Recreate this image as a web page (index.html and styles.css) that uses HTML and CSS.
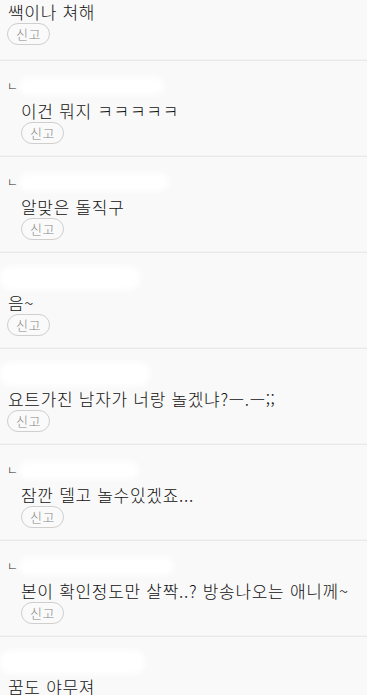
FILE: index.html
```html
<!DOCTYPE html>
<html lang="ko">
<head>
<meta charset="utf-8">
<link rel="stylesheet" href="styles.css">
</head>
<body>
<ul class="list">
  <li class="item first">
    <p class="msg">쌕이나 쳐해</p>
    <button class="report">신고</button>
  </li>
  <li class="item reply">
    <div class="head"><span class="mark">ㄴ</span><span class="blob w145"></span></div>
    <p class="msg">이건 뭐지 ㅋㅋㅋㅋㅋ</p>
    <button class="report">신고</button>
  </li>
  <li class="item reply">
    <div class="head"><span class="mark">ㄴ</span><span class="blob w150"></span></div>
    <p class="msg">알맞은 돌직구</p>
    <button class="report">신고</button>
  </li>
  <li class="item">
    <div class="head"><span class="blob w140"></span></div>
    <p class="msg">음~</p>
    <button class="report">신고</button>
  </li>
  <li class="item">
    <div class="head"><span class="blob w150"></span></div>
    <p class="msg">요트가진 남자가 너랑 놀겠냐?—.—;;</p>
    <button class="report">신고</button>
  </li>
  <li class="item reply">
    <div class="head"><span class="mark">ㄴ</span><span class="blob w120"></span></div>
    <p class="msg">잠깐 델고 놀수있겠죠...</p>
    <button class="report">신고</button>
  </li>
  <li class="item reply">
    <div class="head"><span class="mark">ㄴ</span><span class="blob w155"></span></div>
    <p class="msg">본이 확인정도만 살짝..? 방송나오는 애니께~</p>
    <button class="report">신고</button>
  </li>
  <li class="item">
    <div class="head"><span class="blob w145"></span></div>
    <p class="msg">꿈도 야무져</p>
    <button class="report">신고</button>
  </li>
</ul>
</body>
</html>
```
FILE: styles.css
```css
html, body {
  margin: 0;
  padding: 0;
  background: #f9f9f9;
  overflow: hidden;
}
body {
  font-family: "Noto Sans CJK KR", "Noto Sans", sans-serif;
  color: #111;
}
.list {
  list-style: none;
  margin: 0;
  padding: 0;
}
.item {
  padding: 14px 7px 12px 7px;
  border-bottom: 1px solid #e9e9e9;
  box-shadow: inset 0 -3px 0 -2px #f3f3f3;
}
.item.first {
  padding-top: 2px;
  padding-bottom: 15px;
}
.head {
  height: 22px;
  display: flex;
  align-items: center;
  gap: 3px;
}
.mark {
  font-size: 12px;
  line-height: 1;
  color: #222;
  width: 9px;
  font-weight: 300;
}
.blob {
  height: 18px;
  border-radius: 10px;
  background: #fff;
  filter: blur(3px);
}
.item:not(.reply) .blob { margin-left: -7px; height: 24px; }
.w120 { width: 120px; }
.w140 { width: 140px; }
.w145 { width: 145px; }
.w150 { width: 150px; }
.w155 { width: 155px; }
.msg {
  margin: 4px 0 0 1px;
  font-size: 17px;
  line-height: 20px;
  letter-spacing: 0.7px;
  font-weight: 300;
  white-space: nowrap;
}
.item.first .msg { margin-top: 0; }
.reply .msg,
.reply .report {
  margin-left: 14px;
}
.report {
  display: block;
  margin-top: 1px;
  width: 43px;
  height: 22px;
  padding: 0;
  border: 1px solid #cfcfcf;
  border-radius: 11px;
  background: #fafafa;
  color: #888;
  font-family: "Noto Sans CJK KR", sans-serif;
  font-size: 13px;
  font-weight: 300;
  line-height: 20px;
  letter-spacing: 0.5px;
}
```
